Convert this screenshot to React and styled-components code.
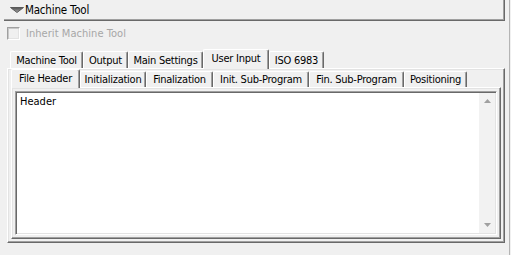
import styled, { createGlobalStyle } from "styled-components";

const GlobalStyle = createGlobalStyle`
  html, body {
    margin: 0;
    padding: 0;
    background: #f0f0f0;
  }
  body {
    font-family: "DejaVu Sans Condensed", "Liberation Sans", Arial, sans-serif;
    font-size: 11px;
    color: #000;
  }
`;

export const Page = styled.div`
  width: 510px;
  height: 255px;
  box-sizing: border-box;
  border-right: 1px solid #b4b4b4;
  display: flex;
  flex-direction: column;
  overflow: hidden;
`;

export const GroupBar = styled.div`
  margin-left: 4px;
  width: 501px;
  height: 21px;
  box-sizing: border-box;
  border-right: 1px solid #696969;
  border-bottom: 1px solid #696969;
  box-shadow: inset -1px -1px 0 #a0a0a0;
  display: flex;
  align-items: center;
  padding-left: 6px;
  gap: 1px;
  font-size: 11.5px;
  letter-spacing: -0.2px;
`;

export const CheckRow = styled.label`
  margin-top: 6px;
  padding-left: 7px;
  height: 13px;
  display: flex;
  align-items: center;
  gap: 6px;
  color: #a7a7a7;
  letter-spacing: 0.05px;
`;

export const CheckBox = styled.span`
  width: 13px;
  height: 13px;
  box-sizing: border-box;
  border: 1px solid;
  border-color: #a0a0a0 #fff #fff #a0a0a0;
  box-shadow: inset 1px 1px 0 #c8c8c8, inset -1px -1px 0 #e3e3e3;
  background: #f0f0f0;
`;

export const TabStrip = styled.div`
  display: flex;
  align-items: flex-end;
  height: ${(p) => p.$height}px;
  margin-top: ${(p) => p.$top || 0}px;
  margin-left: ${(p) => p.$left || 0}px;
  padding-left: ${(p) => p.$pad || 0}px;
  position: relative;
  z-index: 1;
`;

export const Tab = styled.div`
  width: ${(p) => p.$w}px;
  height: ${(p) => (p.$active ? p.$h + 3 : p.$h)}px;
  margin-bottom: ${(p) => (p.$active ? -1 : 0)}px;
  padding-bottom: ${(p) => (p.$active ? 2 : 0)}px;
  box-sizing: border-box;
  border-top: 1px solid #fff;
  border-left: 1px solid #fff;
  border-right: 1px solid #696969;
  border-radius: 2px 2px 0 0;
  box-shadow: inset -1px 0 0 #a0a0a0;
  background: #f0f0f0;
  display: flex;
  align-items: center;
  justify-content: center;
  letter-spacing: -0.25px;
  white-space: nowrap;
  position: relative;
  z-index: ${(p) => (p.$active ? 2 : 1)};
`;

export const Panel = styled.div`
  margin-left: ${(p) => p.$left || 0}px;
  width: ${(p) => p.$w}px;
  height: ${(p) => p.$h}px;
  box-sizing: border-box;
  border: 1px solid;
  border-color: #fff #696969 #696969 #fff;
  box-shadow: inset -1px -1px 0 #a0a0a0, inset 1px 1px 0 #e3e3e3;
  padding: ${(p) => p.$pad};
  display: flex;
  flex-direction: column;
`;

export const Editor = styled.div`
  flex: 1;
  box-sizing: border-box;
  border: 1px solid;
  border-color: #a0a0a0 #fff #fff #a0a0a0;
  box-shadow: inset 1px 1px 0 #696969, inset -1px -1px 0 #e3e3e3;
  background: #fff;
  display: flex;
  padding: 1px;
`;

export const EditorText = styled.div`
  flex: 1;
  padding: 2px 3px;
  line-height: 13px;
`;

export const ScrollBar = styled.div`
  width: 16px;
  background: #f2f2f2;
  display: flex;
  flex-direction: column;
  justify-content: space-between;
`;

export const ScrollButton = styled.div`
  height: 16px;
  display: flex;
  align-items: center;
  justify-content: center;
`;

const Arrow = ({ up }) => (
  <svg width="7" height="4" viewBox="0 0 7 4">
    <polygon
      points={up ? "3.5,0 7,4 0,4" : "0,0 7,0 3.5,4"}
      fill="#a0a0a0"
    />
  </svg>
);

const Triangle = () => (
  <svg width="14" height="6" viewBox="0 0 14 6">
    <defs>
      <linearGradient id="tri" x1="0" y1="0" x2="0" y2="1">
        <stop offset="0" stopColor="#505050" />
        <stop offset="1" stopColor="#a8a8a8" />
      </linearGradient>
    </defs>
    <polygon points="0.5,0.5 13.5,0.5 7,5.5" fill="url(#tri)" stroke="#5a5a5a" strokeWidth="1" />
  </svg>
);

const outerTabs = [
  { label: "Machine Tool", w: 73 },
  { label: "Output", w: 45 },
  { label: "Main Settings", w: 75 },
  { label: "User Input", w: 66, active: true },
  { label: "ISO 6983", w: 55 },
];

const innerTabs = [
  { label: "File Header", w: 69, active: true },
  { label: "Initialization", w: 66 },
  { label: "Finalization", w: 67 },
  { label: "Init. Sub-Program", w: 96 },
  { label: "Fin. Sub-Program", w: 95 },
  { label: "Positioning", w: 63 },
];

const App = () => {
  return (
    <Page>
      <GlobalStyle />
      <GroupBar>
        <Triangle />
        <span>Machine Tool</span>
      </GroupBar>
      <CheckRow>
        <CheckBox />
        Inherit Machine Tool
      </CheckRow>
      <TabStrip $height={17} $top={11} $left={7} $pad={3}>
        {outerTabs.map((t) => (
          <Tab key={t.label} $w={t.w} $h={17} $active={t.active}>
            {t.label}
          </Tab>
        ))}
      </TabStrip>
      <Panel $left={7} $w={498} $h={175} $pad="2px 3px 3px 3px">
        <TabStrip $height={16}>
          {innerTabs.map((t) => (
            <Tab key={t.label} $w={t.w} $h={16} $active={t.active}>
              {t.label}
            </Tab>
          ))}
        </TabStrip>
        <Panel $w={490} $h={152} $pad="3px">
          <Editor>
            <EditorText>Header</EditorText>
            <ScrollBar>
              <ScrollButton>
                <Arrow up />
              </ScrollButton>
              <ScrollButton>
                <Arrow />
              </ScrollButton>
            </ScrollBar>
          </Editor>
        </Panel>
      </Panel>
    </Page>
  );
};

export default App;
